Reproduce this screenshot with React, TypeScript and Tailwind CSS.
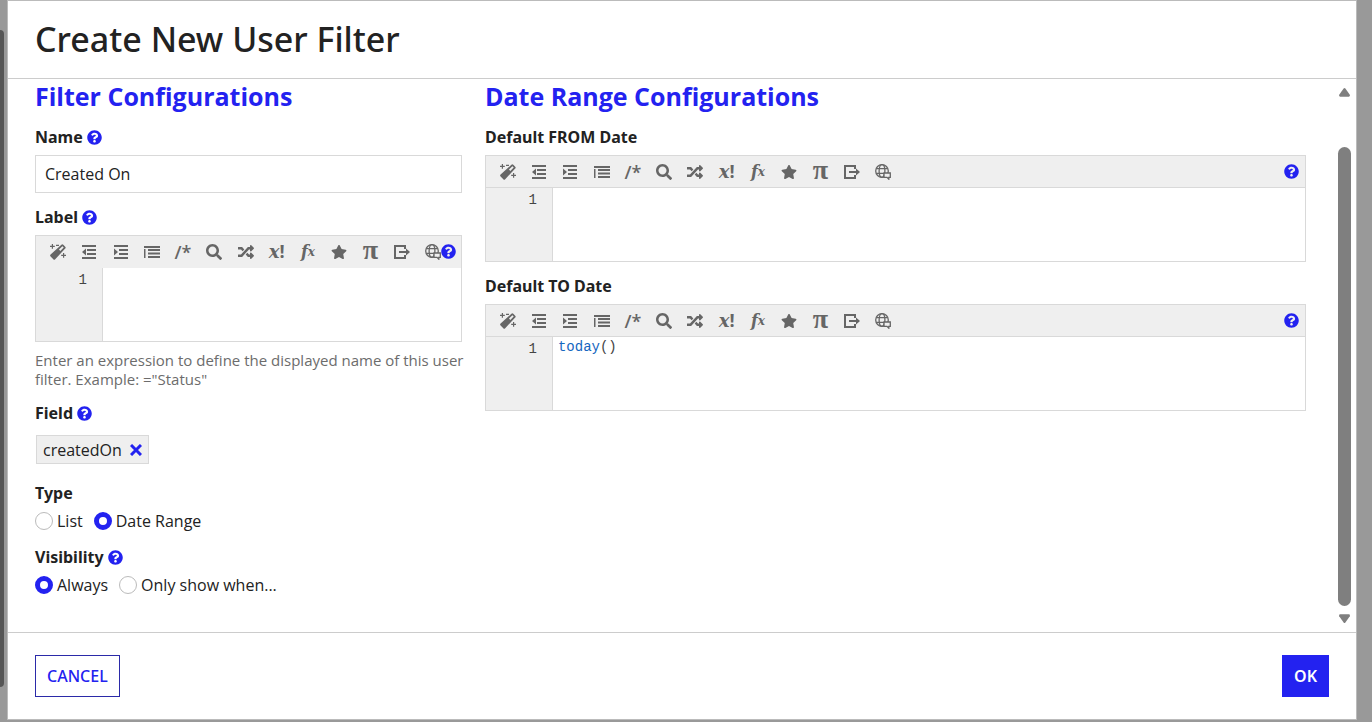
import React, { useState } from 'react';
import { FaQuestionCircle, FaRandom, FaSearch, FaStar } from 'react-icons/fa';

const WandIcon = () => (
  <svg className="w-4 h-4" viewBox="0 0 16 16" fill="currentColor" aria-hidden="true">
    <path
      fillRule="evenodd"
      d="M11.4.8a1.3 1.3 0 011.9 0l1.9 1.9a1.3 1.3 0 010 1.9L5.2 15.2a1.3 1.3 0 01-1.9 0L.6 12.5a1.3 1.3 0 010-1.9zM12.4 2.2L9 5.6l1.3 1.3 3.4-3.4z"
    />
    <path d="M1.8 0H3v1.8h1.8V3H3v1.8H1.8V3H0V1.8h1.8zM6 .8h3V2H6zM13 9h1.2v1.8H16V12h-1.8v1.8H13V12h-1.8v-1.2H13z" />
  </svg>
);

const OutdentIcon = () => (
  <svg className="w-3.5 h-3.5" viewBox="0 0 14 14" fill="currentColor" aria-hidden="true">
    <path d="M0 0h14v2H0zM5 4h9v2H5zM5 8h9v2H5zM0 12h14v2H0zM4 3.5v7L0 7z" />
  </svg>
);

const IndentIcon = () => (
  <svg className="w-3.5 h-3.5" viewBox="0 0 14 14" fill="currentColor" aria-hidden="true">
    <path d="M0 0h14v2H0zM5 4h9v2H5zM5 8h9v2H5zM0 12h14v2H0zM0 3.5v7L4 7z" />
  </svg>
);

const FormatIcon = () => (
  <svg className="w-4 h-3.5" viewBox="0 0 16 14" fill="currentColor" aria-hidden="true">
    <path d="M0 1h16v2H0zM0 4h1.5v9H0zM4 4h12v2H4zM4 7.5h12v2H4zM4 11h12v2H4z" />
  </svg>
);

const ExportIcon = () => (
  <svg
    className="w-4 h-4"
    viewBox="0 0 16 16"
    fill="none"
    stroke="currentColor"
    strokeWidth={2}
    aria-hidden="true"
  >
    <path d="M11 5V2H1v12h10v-3" />
    <path d="M5 8h8" />
    <path d="M12 4.6L16 8l-4 3.4z" fill="currentColor" stroke="none" />
  </svg>
);

const GlobeIcon = () => (
  <svg
    className="w-4 h-4"
    viewBox="0 0 16 16"
    fill="none"
    stroke="currentColor"
    strokeWidth={1.3}
    aria-hidden="true"
  >
    <circle cx="7" cy="7" r="6.3" />
    <ellipse cx="7" cy="7" rx="2.9" ry="6.3" />
    <path d="M1.3 4.6h11.4M1.3 9.4h8" />
    <path d="M9 9h6.3v4.4h-1.5v1.8L12 13.4H9z" fill="#efefef" />
  </svg>
);

const CloseIcon = () => (
  <svg className="w-3 h-3" viewBox="0 0 12 12" fill="none" stroke="currentColor" strokeWidth={3} aria-hidden="true">
    <path d="M1 1l10 10M11 1L1 11" />
  </svg>
);

const tools = [
  { name: 'Format', icon: <WandIcon /> },
  { name: 'Decrease indent', icon: <OutdentIcon /> },
  { name: 'Increase indent', icon: <IndentIcon /> },
  { name: 'Indent all', icon: <FormatIcon /> },
  { name: 'Comment', icon: <span className="font-['Open_Sans',sans-serif] text-lg font-semibold">/*</span> },
  { name: 'Search', icon: <FaSearch className="w-4 h-4" /> },
  { name: 'Shuffle', icon: <FaRandom className="w-4 h-4" /> },
  {
    name: 'Variables',
    icon: (
      <span className="flex items-baseline font-['DejaVu_Serif',serif] text-lg leading-4 font-bold">
        <i>x</i>
        <span className="font-['Open_Sans',sans-serif]">!</span>
      </span>
    ),
  },
  {
    name: 'Functions',
    icon: (
      <span className="flex items-center font-['DejaVu_Serif',serif] text-base leading-4 font-bold italic">
        f<span className="text-xs leading-4">x</span>
      </span>
    ),
  },
  { name: 'Favorites', icon: <FaStar className="w-4 h-4" /> },
  {
    name: 'Constants',
    icon: <span className="pb-1 font-['Liberation_Serif',serif] text-[28px] leading-4 font-bold">π</span>,
  },
  { name: 'Export', icon: <ExportIcon /> },
  { name: 'Translations', icon: <GlobeIcon /> },
];

function HelpButton({ topic }: { topic: string }) {
  return (
    <button type="button" aria-label={`Help for ${topic}`} className="shrink-0 text-[#2322f0]">
      <FaQuestionCircle className="w-[15px] h-[15px]" />
    </button>
  );
}

function FieldLabel({ htmlFor, text, help }: { htmlFor: string; text: string; help?: boolean }) {
  return (
    <div className="flex h-6 items-center gap-1">
      <label htmlFor={htmlFor} className="font-['Noto_Sans',sans-serif] font-bold">
        {text}
      </label>
      {help && <HelpButton topic={text} />}
    </div>
  );
}

type EditorProps = { id: string; label: string; initial?: string; ruled?: boolean };

function ExpressionEditor({ id, label, initial = '', ruled = true }: EditorProps) {
  const [value, setValue] = useState(initial);
  // function names are blue, the rest stays grey
  const parts = value.split(/([a-z]\w*(?=\())/i);

  return (
    <div className="border border-[#d9d9d9] bg-[#efefef]">
      <div
        className={`flex h-8 items-center justify-between border-b pr-1.5 pl-3.5 ${
          ruled ? 'border-[#d9d9d9]' : 'border-[#efefef]'
        }`}
      >
        <div className="flex w-[391px] shrink-0 items-center justify-between text-[#666]">
          {tools.map((tool) => (
            <button
              key={tool.name}
              type="button"
              aria-label={tool.name}
              className="flex h-4 w-4 items-center justify-center leading-4 whitespace-nowrap"
            >
              {tool.icon}
            </button>
          ))}
        </div>
        <HelpButton topic={label} />
      </div>
      <div className="flex h-[73px] font-['Liberation_Mono',monospace] text-sm leading-5">
        <div className="w-[67px] shrink-0 border-r border-[#d9d9d9] pt-0.5 pr-[15px] text-right text-[#444]">1</div>
        <div className="grid grow bg-white">
          <pre
            aria-hidden="true"
            className="col-start-1 row-start-1 px-[5px] font-['Liberation_Mono',monospace] text-[#444]"
          >
            {parts.map((part, i) => (
              <span key={i} className={i % 2 ? 'text-[#1566c0]' : ''}>
                {part}
              </span>
            ))}
          </pre>
          <textarea
            id={id}
            value={value}
            onChange={(e) => setValue(e.target.value)}
            spellCheck={false}
            className="z-10 col-start-1 row-start-1 resize-none bg-transparent px-[5px] text-transparent caret-black outline-none"
          />
        </div>
      </div>
    </div>
  );
}

type RadioProps = { name: string; text: string; defaultChecked?: boolean };

function Radio({ name, text, defaultChecked }: RadioProps) {
  return (
    <label className="flex items-center gap-1">
      <input
        type="radio"
        name={name}
        defaultChecked={defaultChecked}
        className="h-[18px] w-[18px] appearance-none rounded-full border border-[#bbb] bg-white checked:border-[5px] checked:border-[#2322f0]"
      />
      {text}
    </label>
  );
}

export default function App() {
  return (
    <div className="relative min-h-screen bg-[#999] pr-[15px] pl-[7px] font-['Open_Sans',sans-serif] text-base text-[#222]">
      {/* Page scrollbar behind the dialog */}
      <div className="absolute top-[30px] bottom-[35px] left-0 w-1 rounded-r bg-[#555]" />

      <div role="dialog" aria-labelledby="dialog-title" className="border border-[#bbb] bg-white">
        <header className="flex h-[78px] items-center border-b border-[#ccc] px-[27px]">
          <h1 id="dialog-title" className="font-['Noto_Sans',sans-serif] text-[34px] font-medium">
            Create New User Filter
          </h1>
        </header>

        <div className="flex h-[553px]">
          <main className="grid grow grid-cols-[minmax(0,13fr)_minmax(0,25fr)] content-start gap-x-[23px] pr-8 pl-[27px]">
            <section className="flex flex-col gap-3">
              <h2 className="text-[25px] leading-[34px] font-bold text-[#2322f0]">Filter Configurations</h2>

              <div className="flex flex-col gap-1.5">
                <FieldLabel htmlFor="name" text="Name" help />
                <input
                  id="name"
                  type="text"
                  defaultValue="Created On"
                  className="h-[38px] w-full border border-[#d9d9d9] px-[9px] outline-none"
                />
              </div>

              <div className="flex flex-col gap-1.5">
                <FieldLabel htmlFor="label" text="Label" help />
                <ExpressionEditor id="label" label="Label" ruled={false} />
                <p className="-mr-1 pt-[3px] text-[15px] leading-[19px] text-[#6c6c6c]">
                  Enter an expression to define the displayed name of this user filter. Example: ="Status"
                </p>
              </div>

              <div>
                <FieldLabel htmlFor="field" text="Field" help />
                <div className="flex pt-2.5 pb-[5px] pl-px">
                  <div className="flex h-[29px] items-center gap-2 border border-[#d9d9d9] bg-[#efefef] px-1.5">
                    <output id="field">createdOn</output>
                    <button type="button" aria-label="Remove createdOn" className="text-[#2322f0]">
                      <CloseIcon />
                    </button>
                  </div>
                </div>
              </div>

              <fieldset>
                <legend className="font-['Noto_Sans',sans-serif] font-bold">Type</legend>
                <div className="flex gap-[11px] pt-1">
                  <Radio name="type" text="List" />
                  <Radio name="type" text="Date Range" defaultChecked />
                </div>
              </fieldset>

              <fieldset>
                <legend className="flex h-6 items-center gap-1 font-['Noto_Sans',sans-serif] font-bold">
                  Visibility
                  <HelpButton topic="Visibility" />
                </legend>
                <div className="flex gap-[11px] pt-1">
                  <Radio name="visibility" text="Always" defaultChecked />
                  <Radio name="visibility" text="Only show when..." />
                </div>
              </fieldset>
            </section>

            <section className="flex flex-col gap-3">
              <h2 className="text-[25px] leading-[34px] font-bold text-[#2322f0]">Date Range Configurations</h2>

              <div className="flex flex-col gap-1.5">
                <FieldLabel htmlFor="from-date" text="Default FROM Date" />
                <ExpressionEditor id="from-date" label="Default FROM Date" />
              </div>

              <div className="flex flex-col gap-1.5">
                <FieldLabel htmlFor="to-date" text="Default TO Date" />
                <ExpressionEditor id="to-date" label="Default TO Date" initial="today()" />
              </div>
            </section>
          </main>

          {/* Dialog scrollbar */}
          <div className="flex w-[18px] shrink-0 flex-col items-start py-2 text-[#7f7f7f]" aria-hidden="true">
            <svg className="h-3 w-[13px]" viewBox="0 0 13 12" fill="currentColor">
              <path d="M5.6 1.6q.9-1.2 1.8 0l4.4 6.2q.8 1.7-1 1.9H2.2q-1.8-.2-1-1.9z" />
            </svg>
            <div className="mt-12 mb-1.5 w-[13px] grow rounded-full bg-[#7f7f7f]" />
            <svg className="h-3 w-[13px]" viewBox="0 0 13 12" fill="currentColor">
              <path d="M5.6 10.4q.9 1.2 1.8 0l4.4-6.2q.8-1.7-1-1.9H2.2q-1.8.2-1 1.9z" />
            </svg>
          </div>
        </div>

        <footer className="flex items-center justify-between border-t border-[#ccc] px-[27px] py-[22px] font-['Noto_Sans',sans-serif]">
          <button type="button" className="h-[42px] border border-[#2b2aa8] px-[11px] font-medium text-[#2322f0]">
            CANCEL
          </button>
          <button type="button" className="h-[42px] bg-[#2322f0] px-3 font-semibold text-white">
            OK
          </button>
        </footer>
      </div>
    </div>
  );
}
